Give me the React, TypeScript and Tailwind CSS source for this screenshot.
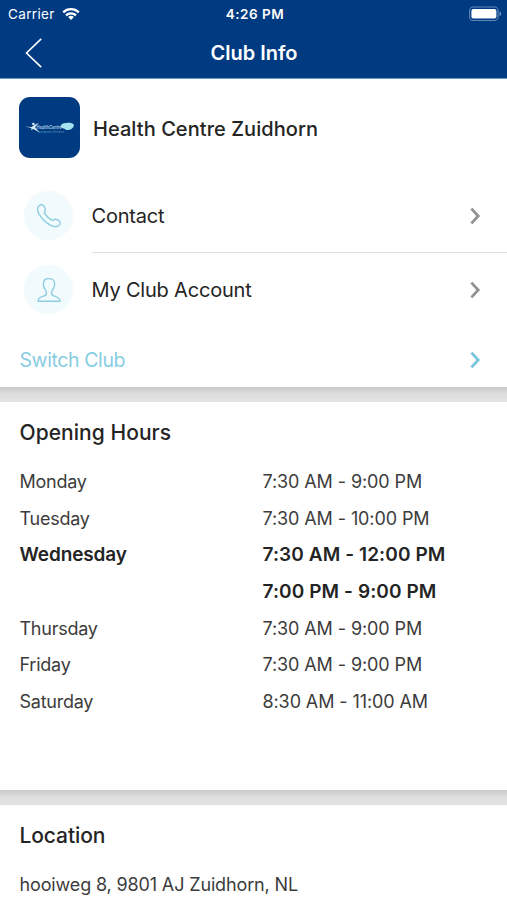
import { clsx } from 'clsx';

// ── Types & Data ────────────────────────────────────────────
interface OpeningRow {
  day: string;
  hours: string;
  today?: boolean;
}

const OPENING_HOURS: OpeningRow[] = [
  { day: 'Monday', hours: '7:30 AM - 9:00 PM' },
  { day: 'Tuesday', hours: '7:30 AM - 10:00 PM' },
  { day: 'Wednesday', hours: '7:30 AM - 12:00 PM', today: true },
  { day: '', hours: '7:00 PM - 9:00 PM', today: true },
  { day: 'Thursday', hours: '7:30 AM - 9:00 PM' },
  { day: 'Friday', hours: '7:30 AM - 9:00 PM' },
  { day: 'Saturday', hours: '8:30 AM - 11:00 AM' },
];

// ── Icons ───────────────────────────────────────────────────
function WifiIcon() {
  return (
    <svg width="18" height="14" viewBox="0 0 18 14" fill="none" stroke="white" strokeWidth="2.3">
      <path d="M1.2 5.3a11.2 11.2 0 0 1 15.6 0" />
      <path d="M4 8.3a7.2 7.2 0 0 1 10 0" />
      <path d="M9 13l-2.9-2.9a4.2 4.2 0 0 1 5.8 0z" fill="white" stroke="none" />
    </svg>
  );
}

function BatteryIcon() {
  return (
    <svg width="33" height="16" viewBox="0 0 33 16" fill="none">
      <rect x="0.6" y="1" width="28.5" height="13.5" rx="3.8" stroke="#6288b7" strokeWidth="1.1" />
      <rect x="2.4" y="3" width="25" height="9.4" rx="2" fill="white" />
      <path d="M30.6 5.5c1.8.5 1.8 4 0 4.5z" fill="#8ca8c9" />
    </svg>
  );
}

function Chevron({ className }: { className?: string }) {
  return (
    <svg className={className} width="12" height="18" viewBox="0 0 12 18" fill="none" stroke="currentColor" strokeWidth="2.8">
      <path d="M1.4 1.6 8.2 9 1.4 16.4" />
    </svg>
  );
}

function PhoneIcon() {
  return (
    <svg width="26" height="26" viewBox="0 0 26 26" fill="none" stroke="#8fcee0" strokeWidth="1.4" strokeLinejoin="round">
      <path d="M2.9 3C4.3 1.4 6.4 1.4 7.8 3C9.3 4.8 9.8 6.6 8.8 8.1C8.1 9.2 8.2 9.9 9 11C10.6 13.2 12.5 15.1 14.9 16.7C16 17.4 16.8 17.5 17.8 16.8C19.4 15.8 21.2 16.2 22.9 17.6C24.6 19.1 24.6 20.9 23.1 22.3C21 24.1 18 24.2 14.4 22.2C9.5 19.5 5.5 15.4 2.8 10.6C1.1 7.5 1 5 2.9 3Z" />
    </svg>
  );
}

function PersonIcon() {
  return (
    <svg width="24" height="26" viewBox="0 0 24 26" fill="none" stroke="#8fcee0" strokeWidth="1.4" strokeLinejoin="round">
      <path d="M12 1.5C8.2 1.5 6.3 3.9 6.3 7.2C6.3 9.7 7.3 12 8.8 13.6C9.4 14.3 9.5 15 9.5 16.2C9.5 18 8.6 18.5 6.5 19.1C2.6 20.2 1 21.3 1 24.2H23C23 21.3 21.4 20.2 17.5 19.1C15.4 18.5 14.5 18 14.5 16.2C14.5 15 14.6 14.3 15.2 13.6C16.7 12 17.7 9.7 17.7 7.2C17.7 3.9 15.8 1.5 12 1.5Z" />
    </svg>
  );
}

function ClubLogo() {
  return (
    <svg className="mb-px rounded-[11px]" width="61" height="61" viewBox="0 0 61 61">
      <rect width="61" height="61" fill="#003b82" />
      <path d="M6 29.2l6.2 1 3.8-2.5 4-2-4 4.6 4.6 5.2-6.2-3.6-2.4 1 .6-1.6z" fill="#dcecf5" />
      <circle cx="14.4" cy="27" r="1.3" fill="#dcecf5" />
      <text x="17.5" y="32.4" fill="#b4d4e8" fontSize="5.4" fontWeight="600" fontStyle="italic" textLength="25" lengthAdjust="spacingAndGlyphs">HealthCentre</text>
      <text x="19" y="35.8" fill="#5f91bd" fontSize="2.5" textLength="26" lengthAdjust="spacingAndGlyphs">Zuidhorn fitness</text>
      <path d="M42 28c2-2.7 11.5-3 12.7-.4.8 2.3-2 5.4-5.5 5.5-3 .1-2.5-1.4-4.6-1.7-2-.3-3.7-1.5-2.6-3.4z" fill="#a4e2ee" />
    </svg>
  );
}

// ── Building blocks ─────────────────────────────────────────
function MenuRow({ icon, label }: { icon: React.ReactNode; label: string }) {
  return (
    <button className="flex h-[73px] w-full items-center pl-6 pr-[25px] text-left">
      <span className="flex size-[49px] items-center justify-center rounded-full bg-[#f1fafc]">{icon}</span>
      <span className="ml-[18.5px] flex-1 pt-px text-[20px] tracking-[-0.2px]">{label}</span>
      <Chevron className="text-[#929292]" />
    </button>
  );
}

function SectionGap() {
  return <div className="h-[15px] bg-linear-to-b from-[#c9c9c9] via-[#dedede] via-45% to-[#e3e3e3]" />;
}

// ── Screen ──────────────────────────────────────────────────
export default function App() {
  return (
    <div className="h-[900px] w-[507px] overflow-hidden bg-white font-['Inter',sans-serif] text-[#242424]">
      <header className="h-[79px] border-b border-[#6d9bc9] bg-[#003b82] text-white">
        <div className="grid h-[27px] grid-cols-3 items-center pl-2 pr-[5px] text-[13.5px]">
          <div className="flex items-center gap-[7px]">
            <span className="pt-px tracking-[0.35px]">Carrier</span>
            <WifiIcon />
          </div>
          <span className="pt-px text-center font-semibold tracking-[0.5px]">4:26 PM</span>
          <span className="flex justify-end"><BatteryIcon /></span>
        </div>
        <div className="grid h-[51px] grid-cols-[60px_1fr_60px] items-center">
          <button aria-label="Back" className="pl-6">
            <svg width="20" height="32" viewBox="0 0 20 32" fill="none" stroke="white" strokeWidth="1.6">
              <path d="M17.2 1.8 2.5 16l14.7 14.2" />
            </svg>
          </button>
          <h1 className="pl-px text-center text-[20px] font-semibold">Club Info</h1>
        </div>
      </header>

      <section>
        <div className="flex h-[98px] items-center gap-[13px] pl-[19px]">
          <ClubLogo />
          <h2 className="pt-[2px] text-[20px] font-medium tracking-[0.06px]">Health Centre Zuidhorn</h2>
        </div>
        <div className="pt-[2px]">
          <MenuRow icon={<PhoneIcon />} label="Contact" />
        </div>
        <div className="ml-[92px] h-px bg-[#dedede]" />
        <MenuRow icon={<PersonIcon />} label="My Club Account" />
        <button className="flex h-[61px] w-full items-center justify-between pl-[19.5px] pr-[25px] pt-[6px] text-[19.5px] tracking-[-0.4px] text-[#86cde2]">
          <span className="pt-[2px]">Switch Club</span>
          <Chevron className="text-[#79c6dd]" />
        </button>
      </section>

      <SectionGap />

      <section className="h-[388px] px-[19.5px] pt-[13px]">
        <h2 className="h-9 text-[21px] font-medium leading-9 tracking-[0.05px]">Opening Hours</h2>
        <dl className="mt-[12px] text-[18px] tracking-[-0.1px]">
          {OPENING_HOURS.map((row) => (
            <div
              key={row.hours + row.day}
              className={clsx('grid h-[36.7px] grid-cols-[243px_1fr] items-center', row.today ? 'pt-px text-[19px] font-semibold tracking-[0.1px]' : 'text-[#3c3c3c]')}
            >
              <dt className={row.today ? 'tracking-[-0.12px]' : 'tracking-[-0.25px]'}>{row.day}</dt>
              <dd>{row.hours}</dd>
            </div>
          ))}
        </dl>
      </section>

      <SectionGap />

      <section className="px-[19.5px] pt-[13px]">
        <h2 className="h-9 text-[21px] font-medium leading-9 tracking-[-0.1px]">Location</h2>
        <p className="mt-[13px] text-[18px] leading-9 tracking-[-0.14px] text-[#3c3c3c]">hooiweg 8, 9801 AJ Zuidhorn, NL</p>
      </section>
    </div>
  );
}
